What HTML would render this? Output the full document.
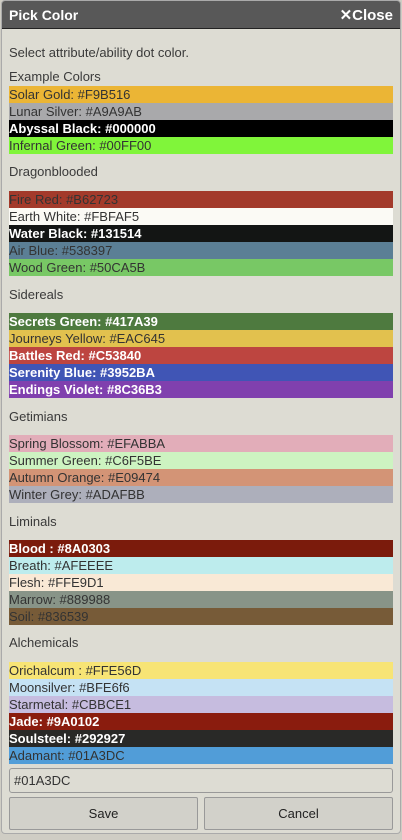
<!DOCTYPE html>
<html><head><style>
*{margin:0;padding:0;box-sizing:border-box}
body{width:402px;height:840px;overflow:hidden;background:#cfcdc4;font-family:"Liberation Sans",sans-serif;position:relative}
.dlg{position:absolute;left:1px;top:0;width:400px;height:834px;background:#dddcd3;border-radius:4px;overflow:hidden;border:1px solid #aaa}
.hd{position:absolute;left:0;top:0;width:100%;height:28px;background:#585858;border-bottom:1px solid #222;color:#fff;font-weight:bold;font-size:14px}
.hd .t{position:absolute;left:7px;top:6px}
.hd .c{position:absolute;right:7px;top:5px;font-size:15px}
.tx{position:absolute;left:7px;font-size:13px;color:#3a3a3a}
.r{position:absolute;left:7px;width:384px;height:17px;font-size:13px;line-height:17px;color:#333;white-space:nowrap}
.w{color:#fff;font-weight:bold}
.inp{position:absolute;left:7px;top:767px;width:384px;height:25px;border:1px solid #999;border-radius:3px;font-size:13px;line-height:23px;padding-left:4px;color:#333}
.btn{position:absolute;top:796px;width:189px;height:33px;border:1px solid #999;border-radius:2px;background:#d2d1ca;font-size:13px;text-align:center;line-height:31px;color:#222}
</style></head><body>
<div class="dlg">
<div class="hd"><span class="t">Pick Color</span><span class="c">✕Close</span></div>
<div class="tx" style="top:44px">Select attribute/ability dot color.</div>
<div class="tx" style="top:68px">Example Colors</div>
<div class="r" style="top:85px;background:#ebb535">Solar Gold: #F9B516</div>
<div class="r" style="top:102px;background:#a9a9ab">Lunar Silver: #A9A9AB</div>
<div class="r w" style="top:119px;background:#000">Abyssal Black: #000000</div>
<div class="r" style="top:136px;background:#80f53a">Infernal Green: #00FF00</div>
<div class="tx" style="top:163px">Dragonblooded</div>
<div class="r" style="top:190px;background:#a33a2b">Fire Red: #B62723</div>
<div class="r" style="top:207px;background:#fbfaf5">Earth White: #FBFAF5</div>
<div class="r w" style="top:224px;background:#131514">Water Black: #131514</div>
<div class="r" style="top:241px;background:#5b7f95">Air Blue: #538397</div>
<div class="r" style="top:258px;background:#78c865">Wood Green: #50CA5B</div>
<div class="tx" style="top:286px">Sidereals</div>
<div class="r w" style="top:312px;background:#4e7a3f">Secrets Green: #417A39</div>
<div class="r" style="top:329px;background:#e2c14e">Journeys Yellow: #EAC645</div>
<div class="r w" style="top:346px;background:#bd4540">Battles Red: #C53840</div>
<div class="r w" style="top:363px;background:#4055b5">Serenity Blue: #3952BA</div>
<div class="r w" style="top:380px;background:#8040ae">Endings Violet: #8C36B3</div>
<div class="tx" style="top:408px">Getimians</div>
<div class="r" style="top:434px;background:#e2adb9">Spring Blossom: #EFABBA</div>
<div class="r" style="top:451px;background:#cdf3c1">Summer Green: #C6F5BE</div>
<div class="r" style="top:468px;background:#d39476">Autumn Orange: #E09474</div>
<div class="r" style="top:485px;background:#adafbb">Winter Grey: #ADAFBB</div>
<div class="tx" style="top:513px">Liminals</div>
<div class="r w" style="top:539px;background:#7b1b0c">Blood : #8A0303</div>
<div class="r" style="top:556px;background:#bdeced">Breath: #AFEEEE</div>
<div class="r" style="top:573px;background:#f9e9d6">Flesh: #FFE9D1</div>
<div class="r" style="top:590px;background:#889488">Marrow: #889988</div>
<div class="r" style="top:607px;background:#775b38">Soil: #836539</div>
<div class="tx" style="top:634px">Alchemicals</div>
<div class="r" style="top:661px;background:#f7e475">Orichalcum : #FFE56D</div>
<div class="r" style="top:678px;background:#c5e2f4">Moonsilver: #BFE6f6</div>
<div class="r" style="top:695px;background:#c6bcdf">Starmetal: #CBBCE1</div>
<div class="r w" style="top:712px;background:#8a1c0e">Jade: #9A0102</div>
<div class="r w" style="top:729px;background:#292927">Soulsteel: #292927</div>
<div class="r" style="top:746px;background:#519dd8">Adamant: #01A3DC</div>
<div class="inp">#01A3DC</div>
<div class="btn" style="left:7px">Save</div>
<div class="btn" style="left:202px">Cancel</div>
</div>
</body></html>
